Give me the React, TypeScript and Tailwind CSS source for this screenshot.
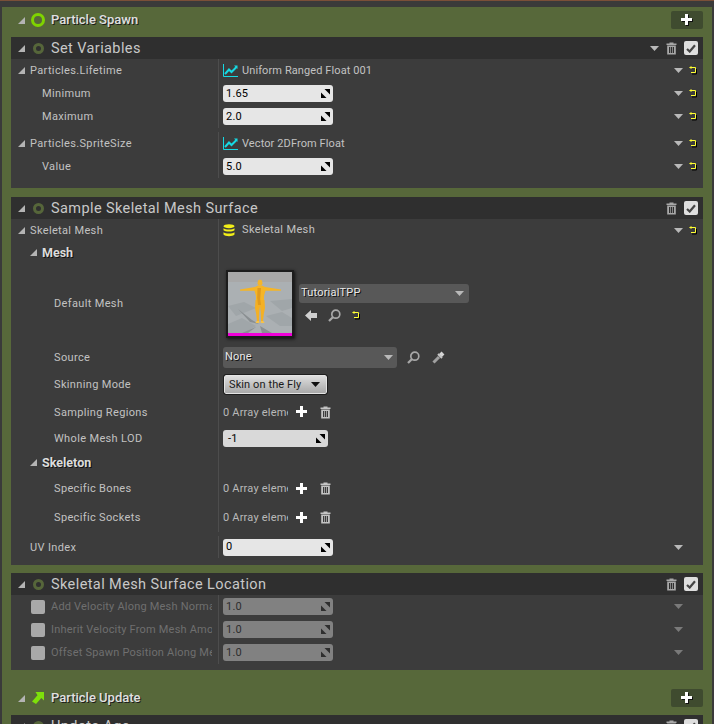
import type { ReactNode } from "react";

/* Small drawn icons */

function Caret({ className = "" }: { className?: string }) {
  return (
    <svg width="7" height="7" viewBox="0 0 7 7" className={className}>
      <path d="M7 0V7H0Z" fill="#b4b4b4" />
    </svg>
  );
}

function DownArrow({ dim = false }: { dim?: boolean }) {
  return (
    <svg width="9" height="5" viewBox="0 0 9 5">
      <path d="M0 0H9L4.5 5Z" fill={dim ? "#7a7a7a" : "#b9b9b9"} />
    </svg>
  );
}

function ResetArrow() {
  return (
    <svg width="8" height="9" viewBox="0 0 8 9" className="shrink-0">
      <path d="M3 8H7.5V3" fill="none" stroke="#000" strokeWidth="1" />
      <path d="M2 1.5H6.5V6.5H2" fill="none" stroke="#ffff33" strokeWidth="1" />
      <path d="M0 1.5L2.5 0V3Z" fill="#ffff33" />
    </svg>
  );
}

function Trash({ color = "#a8a8a8" }: { color?: string }) {
  return (
    <svg width="11" height="13" viewBox="0 0 11 13">
      <path d="M3.5 1.5V.5H7.5V1.5H10.5V3H.5V1.5Z" fill={color} />
      <path fillRule="evenodd" d="M1.2 3.6H9.8V12.5H1.2ZM3 5V11H4.2V5ZM4.9 5V11H6.1V5ZM6.8 5V11H8V5Z" fill={color} />
    </svg>
  );
}

function Plus({ size = 11, shadow = false }: { size?: number; shadow?: boolean }) {
  return (
    <svg width={size + 1} height={size + 1} viewBox="0 0 12 12">
      {shadow && <path d="M5 1H8V5H12V8H8V12H5V8H1V5H5Z" fill="#111" />}
      <path d="M4 0H7V4H11V7H7V11H4V7H0V4H4Z" fill="#fff" />
    </svg>
  );
}

function SpinArrows({ dim = false }: { dim?: boolean }) {
  const c = dim ? "#2e2e2e" : "#000";
  return (
    <svg width="9" height="9" viewBox="0 0 9 9">
      <path d="M3.5 0H9V5.5Z" fill={c} />
      <path d="M0 3.5L5.5 9H0Z" fill={c} />
    </svg>
  );
}

function CurveIcon() {
  return (
    <svg width="15" height="13" viewBox="0 0 15 13" className="shrink-0">
      <path d="M.5 0V12.5H15" fill="none" stroke="#16d9e3" strokeWidth="1" />
      <path d="M2 10L6 5.5L8.5 8L13.5 3" fill="none" stroke="#16d9e3" strokeWidth="2" />
      <path d="M11 1.5H14.5V5Z" fill="#16d9e3" />
    </svg>
  );
}

function Stack() {
  return (
    <svg width="12" height="13" viewBox="0 0 12 13" className="shrink-0">
      <ellipse cx="6" cy="2.2" rx="5.5" ry="2" fill="#f2ee18" />
      <path d="M.5 4.2C2 6 10 6 11.5 4.2V6.2C10 8 2 8 .5 6.2Z" fill="#f2ee18" />
      <path d="M.5 8.2C2 10 10 10 11.5 8.2V10.6C10 12.8 2 12.8 .5 10.6Z" fill="#f2ee18" />
    </svg>
  );
}

function Search() {
  return (
    <svg width="13" height="13" viewBox="0 0 13 13">
      <circle cx="7.8" cy="5.2" r="4" fill="none" stroke="#a8a8a8" strokeWidth="1.7" />
      <path d="M1 12L4.8 8.2" stroke="#a8a8a8" strokeWidth="2.2" />
    </svg>
  );
}

function Dropper() {
  return (
    <svg width="13" height="13" viewBox="0 0 13 13">
      <path d="M1.5 11.5L7 6" stroke="#a0a0a0" strokeWidth="3" />
      <path d="M6 3L10 7" stroke="#c8c8c8" strokeWidth="2" />
      <path d="M8.5 4.5L11 2" stroke="#d4d4d4" strokeWidth="4" />
    </svg>
  );
}

function BackArrow() {
  return (
    <svg width="12" height="11" viewBox="0 0 12 11">
      <path d="M6 0V3H12V8H6V11L0 5.5Z" fill="#d0d0d0" />
    </svg>
  );
}

function Ring({ big = false }: { big?: boolean }) {
  if (big) {
    return <div className="w-[14px] h-[14px] rounded-full border-[3px] border-[#7fd400] shrink-0" />;
  }
  return <div className="w-[11px] h-[11px] rounded-full border-[3px] border-[#56663a] shrink-0" />;
}

function Thumbnail() {
  return (
    <div className="w-[68px] h-[68px] bg-[#1c1c1c] shadow-[1px_1px_3px_#111] shrink-0 flex items-center justify-center">
      <svg width="64" height="64" viewBox="0 0 64 64" className="block">
        <rect width="64" height="10" fill="#a8a8a8" />
        <rect y="10" width="64" height="51" fill="#abb0b3" />
        <path d="M0 34L16 30L28 36L8 44ZM42 29L64 27V36L54 39ZM0 52L14 46L28 54L16 61H0ZM38 44L54 40L64 46V54L52 54Z" fill="#a0a6a9" />
        <path d="M10 37L24 48L31 52L22 50ZM32 54L44 61H34ZM28 55L20 61H14Z" fill="#8a8f92" />
        <rect y="61" width="64" height="3" fill="#f000d8" />
        <path d="M30 8.5L32 7.5L34 8.5L34.5 11.5L33.5 13.5H30.5L29.5 11.5Z" fill="#f4b52a" />
        <path d="M12 17.5L27 15L30 13.5H34L37 15L53 17.5L53 18.8L37.5 18.8L36 24L36 29H28L28 24L26.5 18.8L12 18.8Z" fill="#f6b526" />
        <path d="M27.5 28H36.5L37 36L35.8 42L35 49H33L32.7 40L32 34L31.3 40L31 49H29L28.2 42L27 36Z" fill="#f4b024" />
        <path d="M29.5 16H33L32.2 27L33 33H30L29.2 26Z" fill="#e09a1e" />
        <path d="M28.5 49H31.2V51H27.5ZM32.8 49H35.5L36.5 51H32.8Z" fill="#f7c248" />
      </svg>
    </div>
  );
}

/* Property editors */

function NumberBox({ value, dim = false, wide = true, grey = false }: { value: string; dim?: boolean; wide?: boolean; grey?: boolean }) {
  return (
    <div
      className={`h-[17px] rounded-[3px] flex items-center justify-between pr-[3px] text-[11px] tracking-[0.2px] ${
        wide ? "w-[110px] pl-[3px]" : "w-[105px] pl-[5px]"
      } ${dim ? "bg-[#818181] text-[#2e2e2e]" : grey ? "bg-[#d9d9d9] text-black" : "bg-[#e6e6e6] text-black"}`}
    >
      <span className="pt-px">{value}</span>
      <SpinArrows dim={dim} />
    </div>
  );
}

function Row({
  label,
  indent,
  h,
  caret = false,
  bold = false,
  low = false,
  right,
  end,
}: {
  label: string;
  indent: number;
  h: string;
  caret?: boolean;
  bold?: boolean;
  low?: boolean;
  right?: ReactNode;
  end?: ReactNode;
}) {
  return (
    <div className={`flex ${h}`}>
      <div className="w-[207px] flex items-center relative shrink-0" style={{ paddingLeft: indent }}>
        {caret && <Caret className="absolute -translate-x-[12px]" />}
        <span
          className={
            bold
              ? "pt-px text-[12.5px] font-bold text-[#dcdcdc] [text-shadow:1px_1px_0_#111]"
              : `${low ? "pt-[2px]" : "pt-px"} text-[11px] tracking-[0.35px] text-[#c2c2c2]`
          }
        >
          {label}
        </span>
      </div>
      <div className="flex-1 flex items-center pl-[4px] border-l border-[#4d4d4d]">
        <div className="flex-1 min-w-0">{right}</div>
        {end}
      </div>
    </div>
  );
}

function RowEnd() {
  return (
    <div className="flex items-center gap-[6px] pr-[6px] shrink-0">
      <DownArrow />
      <ResetArrow />
    </div>
  );
}

function ArrayValue({ low = false }: { low?: boolean }) {
  return (
    <div className="flex items-center">
      <span className={`${low ? "pt-[2px]" : "pt-px"} w-[65px] overflow-hidden whitespace-nowrap text-[11px] tracking-[0.2px] text-[#b9b9b9]`}>0 Array elements</span>
      <span className="ml-[8px] flex"><Plus /></span>
      <span className="ml-[12px] flex"><Trash color="#c4c4c4" /></span>
    </div>
  );
}

function ModuleHeader({ title, arrow = false }: { title: string; arrow?: boolean }) {
  return (
    <div className="h-[22px] bg-[#2f2f2f] flex items-center">
      <Caret className="ml-[7px]" />
      <span className="ml-[8px] flex"><Ring /></span>
      <span className="ml-[7px] pt-px flex-1 text-[14.5px] tracking-[0.4px] text-[#c8c8c8]">{title}</span>
      {arrow && <span className="mr-[7px] flex"><DownArrow /></span>}
      <span className="flex mr-[7px]"><Trash /></span>
      <div className="w-[14px] h-[14px] rounded-[2px] bg-[#dedede] flex items-center justify-center mr-[5px]">
        <svg width="10" height="9" viewBox="0 0 10 9">
          <path d="M1 5L3.7 7.5L9 1.2" fill="none" stroke="#444" strokeWidth="2.2" />
        </svg>
      </div>
    </div>
  );
}

function GroupHeader({ title, icon }: { title: string; icon: ReactNode }) {
  return (
    <div className="h-[30px] pb-[4px] flex items-center">
      <Caret className="ml-[7px]" />
      <span className="ml-[6px] w-[14px] flex justify-center">{icon}</span>
      <span className="ml-[6px] flex-1 text-[13px] font-medium text-[#e0e0e0] [text-shadow:1px_1px_0_#1c1c1c]">{title}</span>
      <div className="w-[32px] h-[18px] rounded-[2px] bg-[#3f4b2f] flex items-center justify-center">
        <Plus shadow />
      </div>
    </div>
  );
}

function DisabledRow({ label }: { label: string }) {
  return (
    <div className="flex h-[23px]">
      <div className="w-[207px] flex items-center shrink-0 pl-[20px]">
        <div className="w-[14px] h-[14px] rounded-[2px] bg-[#a9a9a9] shrink-0" />
        <span className="ml-[6px] pt-px w-[161px] overflow-hidden whitespace-nowrap text-[11px] tracking-[0.2px] text-[#6f6f6f]">{label}</span>
      </div>
      <div className="flex-1 flex items-center justify-between pl-[4px] pr-[20px] border-l border-[#4d4d4d]">
        <NumberBox value="1.0" dim />
        <DownArrow dim />
      </div>
    </div>
  );
}

export default function App() {
  return (
    <div className="w-[714px] h-[724px] overflow-hidden bg-[#3a3a3a] font-['Roboto',sans-serif]">
      <div className="h-px bg-[#7a4f38]" />
      <div className="h-[6px]" />
      <div className="ml-[2px] w-[710px] bg-[#57683a] pl-[9px] pr-[9px]">
        <GroupHeader title="Particle Spawn" icon={<Ring big />} />

        <div className="bg-[#3c3c3c] pb-[10px]">
          <ModuleHeader title="Set Variables" arrow />
          <Row label="Particles.Lifetime" indent={19} h="h-[23px]" caret end={<RowEnd />} right={
            <div className="flex items-center gap-[4px] text-[11px] tracking-[0.1px] text-[#c2c2c2]"><CurveIcon /><span className="pt-px">Uniform Ranged Float 001</span></div>
          } />
          <Row label="Minimum" indent={31} h="h-[23px]" end={<RowEnd />} right={<NumberBox value="1.65" />} />
          <Row label="Maximum" indent={31} h="h-[23px]" end={<RowEnd />} right={<NumberBox value="2.0" />} />
          <div className="h-[4px]" />
          <Row label="Particles.SpriteSize" indent={19} h="h-[23px]" caret end={<RowEnd />} right={
            <div className="flex items-center gap-[4px] text-[11px] tracking-[0.1px] text-[#c2c2c2]"><CurveIcon /><span className="pt-px">Vector 2DFrom Float</span></div>
          } />
          <Row label="Value" indent={31} h="h-[23px]" end={<RowEnd />} right={<NumberBox value="5.0" />} />
        </div>

        <div className="h-[9px]" />

        <div className="bg-[#3c3c3c] pb-[7px]">
          <ModuleHeader title="Sample Skeletal Mesh Surface" />
          <Row label="Skeletal Mesh" indent={19} h="h-[22px]" caret low end={<RowEnd />} right={
            <div className="flex items-center gap-[7px] text-[11px] tracking-[0.35px] text-[#c2c2c2]"><Stack />Skeletal Mesh</div>
          } />
          <Row label="Mesh" indent={31} h="h-[23px]" caret bold />
          <Row label="Default Mesh" indent={43} h="h-[79px]" right={
            <div className="flex items-center gap-[5px] pl-[3px]">
              <Thumbnail />
              <div className="flex flex-col gap-[6px] mb-[2px]">
                <div className="w-[170px] h-[19px] rounded-[3px] bg-[#585858] flex items-center justify-between pl-[2px] pr-[5px] text-[11px] tracking-[0.2px] text-[#e8e8e8] [text-shadow:1px_1px_0_#111]">
                  TutorialTPP
                  <DownArrow />
                </div>
                <div className="flex items-center gap-[11px] pl-[6px]">
                  <BackArrow />
                  <Search />
                  <ResetArrow />
                </div>
              </div>
            </div>
          } />
          <Row label="Source" indent={43} h="h-[28px]" low right={
            <div className="flex items-center gap-[10px]">
              <div className="w-[174px] h-[21px] rounded-[3px] bg-[#585858] flex items-center justify-between pl-[2px] pr-[4px] text-[11px] tracking-[0.2px] text-[#e8e8e8] [text-shadow:1px_1px_0_#111]">
                None
                <DownArrow />
              </div>
              <Search />
              <span className="ml-[2px] flex"><Dropper /></span>
            </div>
          } />
          <Row label="Skinning Mode" indent={43} h="h-[27px]" right={
            <div className="ml-px w-[103px] h-[19px] rounded-[2px] border border-[#e4e4e4] outline outline-[#1e1e1e] bg-gradient-to-b from-[#dedede] to-[#a9a9a9] flex items-center justify-between pl-[4px] pr-[6px] text-[11px] tracking-[0.1px] text-[#1a1a1a]">
              <span className="pt-px">Skin on the Fly</span>
              <svg width="9" height="5" viewBox="0 0 9 5"><path d="M0 0H9L4.5 5Z" fill="#111" /></svg>
            </div>
          } />
          <Row label="Sampling Regions" indent={43} h="h-[28px]" low right={<ArrayValue low />} />
          <Row label="Whole Mesh LOD" indent={43} h="h-[25px]" right={<NumberBox value="-1" wide={false} grey />} />
          <Row label="Skeleton" indent={31} h="h-[23px]" caret bold />
          <Row label="Specific Bones" indent={43} h="h-[29px]" right={<ArrayValue />} />
          <Row label="Specific Sockets" indent={43} h="h-[29px]" right={<ArrayValue />} />
          <div className="h-[4px]" />
          <Row label="UV Index" indent={19} h="h-[22px]" low right={<NumberBox value="0" />} end={
            <span className="flex pr-[20px]"><DownArrow /></span>
          } />
        </div>

        <div className="h-[8px]" />

        <div className="bg-[#3c3c3c] pb-[6px]">
          <ModuleHeader title="Skeletal Mesh Surface Location" />
          <DisabledRow label="Add Velocity Along Mesh Normal" />
          <DisabledRow label="Inherit Velocity From Mesh Amount" />
          <DisabledRow label="Offset Spawn Position Along Mesh Normal" />
        </div>

        <div className="h-[15px]" />
        <GroupHeader title="Particle Update" icon={
          <svg width="12" height="12" viewBox="0 0 12 12"><path d="M3.5 0H12V8.5L9.3 6L4 12L0 9.5L5.5 3.2Z" fill="#7ee00a" /></svg>
        } />
        <ModuleHeader title="Update Age" />
        <div className="h-[30px] bg-[#3c3c3c]" />
      </div>
    </div>
  );
}
